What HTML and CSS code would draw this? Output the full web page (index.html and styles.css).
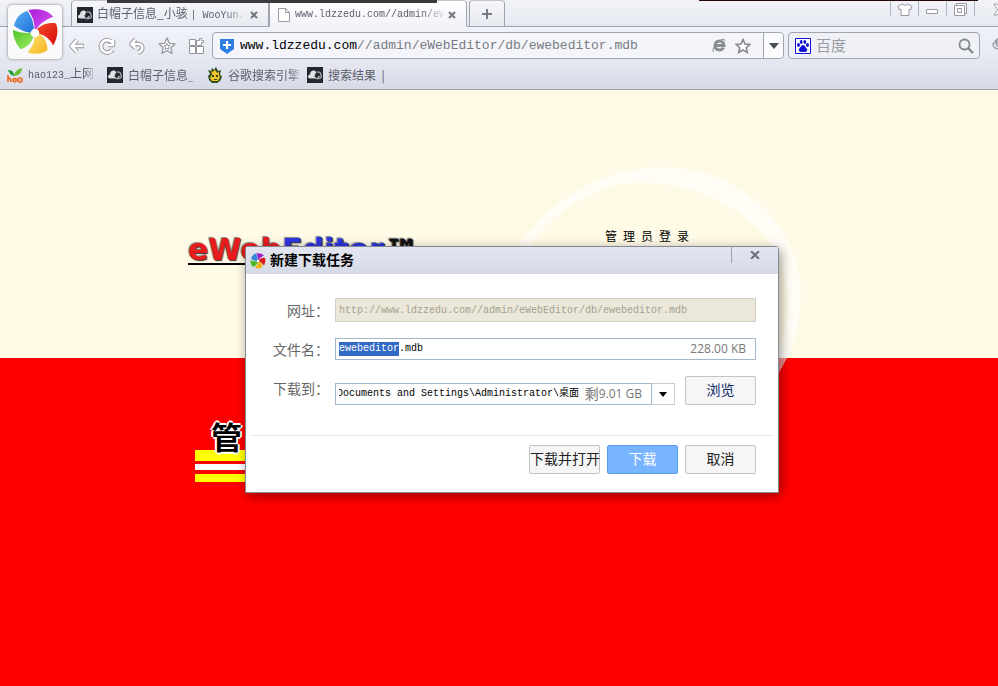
FILE: index.html
```html
<!DOCTYPE html>
<html lang="zh-CN">
<head>
<meta charset="utf-8">
<title>www.ldzzedu.com</title>
<link rel="stylesheet" href="styles.css">
</head>
<body>
<svg class="defs" width="0" height="0" aria-hidden="true">
  <defs>
    <linearGradient id="gb" x1="0" y1="0" x2="1" y2="1"><stop offset="0" stop-color="#5db0f5"/><stop offset="1" stop-color="#1c6fd8"/></linearGradient>
    <linearGradient id="gp" x1="0" y1="0" x2="1" y2="1"><stop offset="0" stop-color="#a81fd8"/><stop offset="1" stop-color="#df55f5"/></linearGradient>
    <linearGradient id="gr" x1="0" y1="0" x2="1" y2="1"><stop offset="0" stop-color="#f5502c"/><stop offset="1" stop-color="#d80c0c"/></linearGradient>
    <linearGradient id="gy" x1="0" y1="0" x2="1" y2="1"><stop offset="0" stop-color="#ffe878"/><stop offset="1" stop-color="#f6b21d"/></linearGradient>
    <linearGradient id="gg" x1="0" y1="0" x2="1" y2="1"><stop offset="0" stop-color="#4fc22c"/><stop offset="1" stop-color="#a4ef62"/></linearGradient>
  </defs>
  <symbol id="pinwheel" viewBox="0 0 48 48">
    <path fill="url(#gb)" d="M23 25C14 25 6 21 2 17 4 9 9 4 16 2c5 6 7 14 7 23z"/>
    <path fill="url(#gp)" d="M23 25C25 15 21 7 17 1 27-1 37 1 43 8 34 11 27 17 23 25z"/>
    <path fill="url(#gr)" d="M23 25C28 17 37 13 46 15 49 23 47 31 43 38 39 30 33 26 23 25z"/>
    <path fill="url(#gy)" d="M23 24C32 26 37 33 37 43 31 47 23 48 16 45 22 39 25 32 23 24z"/>
    <path fill="url(#gg)" d="M24 24C22 33 17 40 9 42 4 36 1 29 1 22 9 25 16 26 24 24z"/>
    <circle cx="24" cy="25" r="4.500" fill="#fff"/>
  </symbol>
  <symbol id="pinwheel-small" viewBox="0 0 16 16">
    <path fill="#2f86dc" d="M8 8Q3 8 1 5.500 2 2 5.500.5 8 3 8 8z"/>
    <path fill="#9c1fc4" d="M8 8Q8.500 3 6 .3 11-.5 14 2.500 10 4 8 8z"/>
    <path fill="#d81818" d="M8 8Q11 4 15.300 5 16 9 14 12.500 12 9 8 8z"/>
    <path fill="#f2b414" d="M8 8Q12.500 10 12.300 14 9 16.500 5 15 8 12 8 8z"/>
    <path fill="#4db82a" d="M8 8Q7 13 3 14 0 11 .3 7.200 4 9 8 8z"/>
    <circle cx="8" cy="8" r="1.300" fill="#fff"/>
  </symbol>
  <symbol id="cloud" viewBox="0 0 16 16">
    <path fill="#23262c" d="M0 0h16v16H0z"/>
    <path fill="#dfe1e5" d="M3 11.500C0 11 .8 8 3 7.500 3 3 8 2.500 9.500 5.500L8 7l.5 1.500L7 8.500l2.500 3z"/>
    <path fill="none" stroke="#a9acb2" stroke-width="1.400" d="M10 5c3-.5 4 1.500 4 3 1 2 0 3.500-2 3.500h-2L12.500 9"/>
  </symbol>
</svg>

<header class="chrome">
  <button class="logo" aria-label="菜单"><svg width="46" height="46"><use href="#pinwheel"/></svg></button>
  <div class="rows">
    <div class="tabrow">
      <div class="tab">
        <svg width="16" height="16"><use href="#cloud"/></svg>
        <span class="title fade">白帽子信息_小骇 <span class="mono"> | WooYun.</span></span>
        <button class="close" aria-label="关闭标签"><svg width="8" height="8" viewBox="0 0 8 8"><path d="M1 1l6 6M7 1L1 7"/></svg></button>
      </div>
      <div class="tab active">
        <svg width="12" height="14" viewBox="0 0 12 14"><path fill="#fff" stroke="#9a9ca2" d="M.5.5h7l4 4v9H.5zM7.500.5v4h4"/></svg>
        <span class="title fade mono">www.ldzzedu.com//admin/eW</span>
        <button class="close" aria-label="关闭标签"><svg width="8" height="8" viewBox="0 0 8 8"><path d="M1 1l6 6M7 1L1 7"/></svg></button>
      </div>
      <button class="tab new" aria-label="新标签"><svg width="12" height="12" viewBox="0 0 12 12"><path stroke="#777a82" stroke-width="2" d="M6 1v10M1 6h10"/></svg></button>
      <div class="winctl">
        <button aria-label="皮肤"><svg width="16" height="13" viewBox="0 0 16 13"><path fill="#fff" stroke="#96999f" d="M5 1Q8 4 11 1L15 3.500 13.500 7 12 6v6.500H4V6L2.500 7 1 3.500z"/></svg></button>
        <button aria-label="最小化"><svg width="13" height="13" viewBox="0 0 13 13"><path fill="#fff" stroke="#96999f" d="M.5 6.500h11v4H.5z"/></svg></button>
        <button aria-label="还原"><svg width="13" height="13" viewBox="0 0 13 13"><path fill="#fff" stroke="#96999f" d="M2.500 2.500v-2h10v10h-2"/><path fill="#fff" stroke="#96999f" d="M.5 2.500h10v10H.5zM3.500 5.500h4v4h-4z"/></svg></button>
        <button class="last" aria-label="关闭"><svg width="13" height="13" viewBox="0 0 13 13"><path fill="#fff" stroke="#96999f" d="M1 1h3l2.500 3L9 1h3L8.500 6.500 12 12H9L6.500 9 4 12H1l3.500-5.500z"/></svg></button>
      </div>
    </div>
    <div class="navrow">
      <div class="navbtns">
        <button aria-label="后退"><svg width="18" height="18" viewBox="0 0 18 18"><path class="o" d="M9 3L3.500 9 9 15M4 9h12"/><path class="i" d="M9 3L3.500 9 9 15M4 9h11.500"/></svg></button>
        <button aria-label="刷新"><svg width="18" height="18" viewBox="0 0 18 18"><path class="o" d="M14.500 12.500A6.200 6.200 0 1 1 14 5.500M15 3v5h-5"/><path class="i" d="M14.500 12.500A6.200 6.200 0 1 1 14 5.500M15 3v5h-5"/></svg></button>
        <button aria-label="撤销"><svg width="18" height="18" viewBox="0 0 18 18"><path class="o" d="M7.500 2.500L3.500 7l4 4M4 7h6c6 0 5.500 7 0 8.500"/><path class="i" d="M7.500 2.500L3.500 7l4 4M4 7h6c6 0 5.500 7 0 8.500"/></svg></button>
        <button aria-label="收藏夹"><svg width="18" height="18" viewBox="0 0 18 18"><path fill="#fff" stroke="#92959c" stroke-width="1.300" stroke-linejoin="round" d="M9 1l2.400 5.300 5.600.6-4.200 3.800L14 16.500 9 13.500l-5 3 1.200-5.800L1 6.900l5.600-.6z"/><path fill="none" stroke="#92959c" d="M9 6.500l.9 1.900 2.100.3-1.500 1.500.4 2.200L9 11.300l-1.900 1.100.4-2.200L6 8.700l2.100-.3z"/></svg></button>
        <button aria-label="应用"><svg width="18" height="18" viewBox="0 0 18 18"><path fill="#fff" stroke="#92959c" d="M1.500 2.500h6v6h-6zM1.500 9.500h6v7h-6zM8.500 9.500h7v7h-7zM8.500 3.500h3v-2h2v2h2v2h-2v3h-5z"/></svg></button>
      </div>
      <form class="address">
        <svg width="16" height="16" viewBox="0 0 16 16"><path fill="#2f7ee4" d="M1 1h14v10l-7 5-7-5z"/><path stroke="#fff" stroke-width="2.200" d="M8 3v8M4 7h8"/></svg>
        <div class="url" role="textbox" aria-label="地址" contenteditable="true"><span class="host">www.ldzzedu.com</span>//admin/eWebEditor/db/ewebeditor.mdb</div>
        <svg width="16" height="16" viewBox="0 0 16 16"><path fill="none" stroke="#898c92" stroke-width="3" d="M5 7.500h8C12.500 1.500 4 1.500 4 7.500c0 5.500 7 5.500 8.500 2"/><path fill="none" stroke="#898c92" d="M3 14C-1 13 7 2 12 1.300c2-.3 2 1 1.500 2"/></svg>
        <svg width="16" height="16" viewBox="0 0 16 16"><path fill="#fff" stroke="#85888f" stroke-width="1.600" d="M8 1.500l2 4.500 4.800.5-3.500 3.200 1 4.800L8 12l-4.300 2.500 1-4.800L1.200 6.500 6 6z"/></svg>
        <button class="drop" type="button" aria-label="历史"><svg width="10" height="6" viewBox="0 0 10 6"><path fill="#4a4d54" d="M0 0h10L5 6z"/></svg></button>
      </form>
      <form class="search">
        <svg width="16" height="16" viewBox="0 0 16 16"><path fill="#fff" stroke="#1111d8" d="M.5.5h15v15H.5z"/><g fill="#1111d8"><ellipse cx="3.500" cy="7" rx="1.500" ry="2"/><ellipse cx="6.200" cy="4" rx="1.400" ry="2"/><ellipse cx="9.800" cy="4" rx="1.400" ry="2"/><ellipse cx="12.500" cy="7" rx="1.500" ry="2"/><path d="M8 7c2 0 2.500 2.500 4 4 1 2-1 3.500-4 2.700C5 14.500 3 13 4 11c1.500-1.500 2-4 4-4z"/></g></svg>
        <input type="text" aria-label="搜索" placeholder="百度">
        <button type="button" aria-label="搜索"><svg width="16" height="16" viewBox="0 0 16 16"><circle cx="6.500" cy="6.500" r="5" fill="none" stroke="#85888f" stroke-width="1.800"/><path stroke="#85888f" stroke-width="2.400" d="M10 10l5 5"/></svg></button>
      </form>
      <button class="more" aria-label="更多"><svg width="16" height="16" viewBox="0 0 16 16"><path fill="none" stroke="#92959c" stroke-width="1.200" d="M7 0L3 3l4 3M3 3h3M1 5c-1 8 12 8 13 0M1 5h3c0 4 3 4 6 3"/></svg></button>
    </div>
  </div>
  <div class="strip left"></div>
  <div class="strip right"></div>
</header>
<nav class="bookmarks">
  <a href="#" class="hao"><svg width="16" height="16" viewBox="0 0 16 16"><path fill="#1f9c3a" d="M7 9C3 8 2 5 1 3c4 0 6 2 6 6z"/><path fill="#62bd32" d="M7 9C7 5 11 2 15 1c0 4-3 8-8 8z"/><path fill="none" stroke="#ef6a22" stroke-width="1.700" d="M1 8v7M1 12q3-2 3 3M9 11v4M9 12c-4-2-4 4 0 2.500M15 13a2 2 0 1 1-4 0 2 2 0 1 1 4 0"/></svg><span class="fade"><span class="mono">hao123_</span>上网</span></a>
  <a href="#" class="white"><svg width="16" height="16"><use href="#cloud"/></svg><span class="fade">白帽子信息_</span></a>
  <a href="#" class="google"><svg width="16" height="16" viewBox="0 0 16 16"><path fill="#2c4a1c" d="M3 7L1 3l3 1 1-3 2 2 2-3 2 4 3-1-1 4 2 3-2 4-3 2H5l-3-3-1-4z"/><path fill="#f0c22a" d="M5 7L4 4l2 1 1-2 2 1 1 2 2-1v3l1 2-2 4H5l-2-3z"/><path fill="#2c4a1c" d="M5 8h2v2H5zM9 8h2v2H9zM7 12h3v1H7z"/></svg><span class="fade">谷歌搜索引擎</span></a>
  <a href="#"><svg width="16" height="16"><use href="#cloud"/></svg><span>搜索结果&nbsp; |</span></a>
</nav>

<main class="page">
  <svg class="arc" width="300" height="220" viewBox="510 160 300 220" aria-hidden="true">
    <path fill="#fffdf6" d="M520 245C555 195 607 167 663 167 740 169 797 222 801 290Q801 330 787 358H776Q788 335 788 300C785 255 770 235 740 213 690 178 640 182 620 184 575 195 550 220 529 245z"/>
    <path fill="#f08c8c" d="M775 358h12l-12 22z"/>
  </svg>
  <section class="top">
    <h1 class="brand"><span class="red">eWeb</span><span class="blue">Editor</span><span class="tm">™</span></h1>
    <p class="login">管理员登录</p>
  </section>
  <section class="bottom">
    <div class="badge"><span>管</span></div>
  </section>
</main>

<form class="dialog" role="dialog" aria-labelledby="dlg-title">
  <div class="dlg-head">
    <svg width="16" height="16"><use href="#pinwheel-small"/></svg>
    <h2 id="dlg-title">新建下载任务</h2>
    <button type="button" class="dlg-close" aria-label="关闭"><svg width="10" height="8" viewBox="0 0 10 8"><path stroke="#6a6e78" stroke-width="2" d="M1 0l8 8M9 0L1 8"/></svg></button>
  </div>
  <div class="fields">
    <label for="addr">网址：</label>
    <input id="addr" class="box" type="text" disabled value="http://www.ldzzedu.com//admin/eWebEditor/db/ewebeditor.mdb">
    <label for="fname">文件名：</label>
    <div class="box group"><input id="fname" type="text" value="ewebeditor.mdb"><span class="size">228.00 KB</span></div>
    <label for="path">下载到：</label>
    <div class="dest">
      <div class="combo">
        <div class="box group"><input id="path" type="text" value="Documents and Settings\Administrator\桌面"><span class="size"><span class="left">剩</span>9.01 GB</span></div>
        <button type="button" class="arrow" aria-label="选择目录"><svg width="8" height="5" viewBox="0 0 8 5"><path d="M0 0h8L4 5z"/></svg></button>
      </div>
      <button type="button" class="btn browse">浏览</button>
    </div>
  </div>
  <div class="actions">
    <button type="button" class="btn">下载并打开</button>
    <button type="button" class="btn primary">下载</button>
    <button type="button" class="btn">取消</button>
  </div>
</form>
<script src="main.js"></script>
</body>
</html>
```
FILE: styles.css
```css
* { box-sizing: border-box; }
body {
  margin: 0;
  min-height: 100vh;
  display: flex;
  flex-direction: column;
  position: relative;
  overflow: hidden;
  background: #f00;
  color: #5c606c;
  font: 12px/16px "Noto Sans CJK SC", sans-serif;
}
button, input { font: inherit; color: inherit; margin: 0; padding: 0; border: 0; background: none; outline: 0; }
svg { display: block; flex: none; }
.defs { position: absolute; }
.mono { font-family: "Liberation Mono", monospace; font-size: 10px; }
.fade { overflow: hidden; white-space: nowrap; -webkit-mask-image: linear-gradient(90deg, #000 85%, rgba(0, 0, 0, .2)); mask-image: linear-gradient(90deg, #000 85%, rgba(0, 0, 0, .2)); }

/* Browser chrome */
.chrome { position: relative; display: flex; height: 62px; background: linear-gradient(#f1f3f8, #e6e9f0 26px, #9fa3ad 26px, #9fa3ad 27px, #f2f3f9 27px, #e5e7f0); }
.strip { position: absolute; top: 0; }
.strip.left { left: 107px; width: 330px; height: 3px; background: #3a3a3c; }
.strip.right { right: 20px; width: 279px; height: 1px; background: #2a0508; }
.logo { width: 54px; height: 54px; margin: 5px 0 0 8px; flex: none; display: grid; place-items: center; background: #fafafc; border-radius: 4px; box-shadow: 0 0 3px #777; }
.rows { flex: 1; min-width: 0; }
.tabrow { display: flex; height: 27px; padding-left: 9px; }
.tab { display: flex; align-items: center; width: 198px; height: 27px; padding: 2px 10px 0 5px; gap: 4px; border: 1px solid #a0a3ac; border-top-color: #c3c5cc; border-radius: 4px 4px 0 0; background: linear-gradient(#f5f6fa, #e8eaf1); }
.tab.active { padding-left: 8px; gap: 5px; background: linear-gradient(#fff, #f2f3f9); border-bottom-color: #f2f3f9; }
.tab.new { width: 36px; padding: 0; margin-left: 2px; justify-content: center; }
.title { flex: 1; }
.close path { stroke: #73767e; stroke-width: 2; }
.winctl { display: flex; height: 16px; margin: 0 -32px 0 auto; }
.winctl button { width: 28px; display: grid; place-items: center; padding-top: 2px; border-left: 1px solid #b2b5be; }
.winctl .last { width: 56px; padding-right: 6px; }
.navrow { display: flex; align-items: center; height: 35px; padding: 2px 0 0 6px; }
.navbtns { display: flex; gap: 12px; width: 144px; flex: none; }
.navbtns .o { fill: none; stroke: #92959c; stroke-width: 4.6; stroke-linejoin: round; }
.navbtns .i { fill: none; stroke: #fff; stroke-width: 2.6; stroke-linejoin: round; }
.address, .search { display: flex; align-items: center; height: 27px; border: 1px solid #a2a5ae; border-radius: 4px; background: #f4f5fa; }
.address { flex: 1; min-width: 0; gap: 8px; padding-left: 6px; }
.url { flex: 1; min-width: 0; margin-left: -3px; overflow: hidden; white-space: nowrap; color: #777a82; font: 13px/20px "Liberation Mono", monospace; }
.host { color: #000; }
.drop { width: 20px; height: 25px; margin-left: 4px; display: grid; place-items: center; border-left: 1px solid #a2a5ae; background: #fafbfd; border-radius: 0 4px 4px 0; }
.search { width: 192px; flex: none; margin-left: 4px; padding: 0 5px 0 6px; gap: 5px; background: #eff1f6; }
.search input { flex: 1; min-width: 0; font-size: 15px; line-height: 20px; padding-bottom: 2px; }
.search input::placeholder { color: #999ca3; opacity: 1; }
.more { margin: 0 -10px 0 12px; flex: none; }
.bookmarks { display: flex; height: 28px; padding: 0 0 2px 7px; align-items: center; background: linear-gradient(#e5e7f0, #d7dae6); border-bottom: 1px solid #a0a3ac; }
.bookmarks a { display: flex; align-items: center; gap: 5px; color: inherit; text-decoration: none; }
.bookmarks .hao, .bookmarks .white, .bookmarks .google { width: 100px; padding-right: 10px; }
.bookmarks .google { padding-right: 5px; }

/* Page under the dialog */
.page { flex: 1; display: flex; flex-direction: column; position: relative; }
.arc { position: absolute; z-index: 1; left: 510px; top: 70px; }
.top { display: flex; height: 268px; padding: 138px 0 0 188px; background: #fffae6; }
.brand { display: flex; width: 417px; height: 32px; margin: 5px 0 0; flex: none; white-space: nowrap; font: bold 30px/34px "DejaVu Sans", sans-serif; }
.brand span { border-bottom: 2px solid #000; height: 32px; text-shadow: 1px 1px 1px #333, -1px -1px 1px #888; }
.brand .red { color: #e81c1c; }
.brand .blue { color: #2b35e0; }
.brand .tm { color: #111; font-size: 36px; line-height: 40px; }
.login { position: relative; z-index: 2; margin: 0; color: #000; font-size: 12px; letter-spacing: 6px; }
.bottom { flex: 1; background: #f00; padding: 92px 0 0 195px; }
.badge { width: 90px; height: 32px; display: flex; background: linear-gradient(#ff0 11px, #f00 11px, #f00 14px, #fff 14px, #fff 20px, #f00 20px, #f00 24px, #ff0 24px); }
.badge span { margin: -32px 0 0 16px; color: #000; font: bold 31px/36px "Noto Sans CJK SC", sans-serif; text-shadow: 2px 0 #fff, -2px 0 #fff, 0 2px #fff, 0 -2px #fff, 1px 1px #fff, -1px -1px #fff; }

/* Download dialog */
.dialog { position: absolute; z-index: 3; left: 245px; top: 246px; width: 534px; background: #fff; border: 1px solid #858993; border-radius: 3px 3px 0 0; box-shadow: 2px 3px 12px rgba(0, 0, 0, .4); }
.dlg-head { display: flex; height: 27px; align-items: center; gap: 4px; padding-left: 4px; background: linear-gradient(#e3e6f0, #d5dae6); }
.dlg-head h2 { flex: 1; margin: 0; color: #000; font-size: 14px; line-height: 16px; padding-bottom: 4px; font-weight: 700; }
.dlg-close { align-self: flex-start; width: 47px; height: 16px; display: grid; place-items: center; border-left: 1px solid #9ea2ad; }
.fields { display: grid; grid-template-columns: 83px 1fr; column-gap: 6px; row-gap: 15px; padding: 24px 22px 0 0; color: #666; font-size: 14px; line-height: 24px; }
.fields label { text-align: right; }
.box { width: 100%; height: 24px; border: 1px solid #a4b7cb; padding: 0 3px; background: #fff; }
.fields input { font: 10px/14px "Liberation Mono", "Noto Sans CJK SC", monospace; color: #000; }
.fields .box:disabled { background: #ebe8d9; color: #a3a192; border-color: #d0d0c4; }
.group { display: flex; align-items: center; height: 22px; margin-top: 1px; }
.group input { flex: 1; min-width: 0; height: 14px; }
.group input::selection { background: #316ac5; color: #fff; }
.size { display: flex; align-items: center; padding: 0 6px; color: #777; font: 12px/20px "Open Sans", sans-serif; white-space: nowrap; }
.size .left { font: 14px/18px "Noto Sans CJK SC", sans-serif; padding-bottom: 2px; }
.dest { display: flex; gap: 10px; align-items: flex-start; }
.combo { display: flex; flex: 1; margin-top: 6px; }
.combo .size { padding: 0 6px 0 0; }
.combo input { text-indent: -2px; }
.arrow { width: 23px; height: 22px; margin-top: 1px; flex: none; display: grid; place-items: center; border: 1px solid #ccc; border-left: 0; }
.btn { width: 71px; height: 29px; padding-bottom: 3px; border: 1px solid #c2c4c8; border-radius: 2px; background: #f6f6f7; color: #222; font-size: 14px; line-height: 20px; white-space: nowrap; }
.browse { color: #0b2a66; }
.btn.primary { background: #78b4ff; border-color: #5a9cf0; color: #fff; }
.actions { display: flex; justify-content: flex-end; gap: 7px; margin: 30px 6px 0; padding: 9px 16px 18px; border-top: 1px solid #e6e7e8; }
```
FILE: main.js
```js
// Preselect the base name so typing keeps the extension.
const fname = document.getElementById('fname');
fname.focus();
fname.setSelectionRange(0, fname.value.lastIndexOf('.'));
```
